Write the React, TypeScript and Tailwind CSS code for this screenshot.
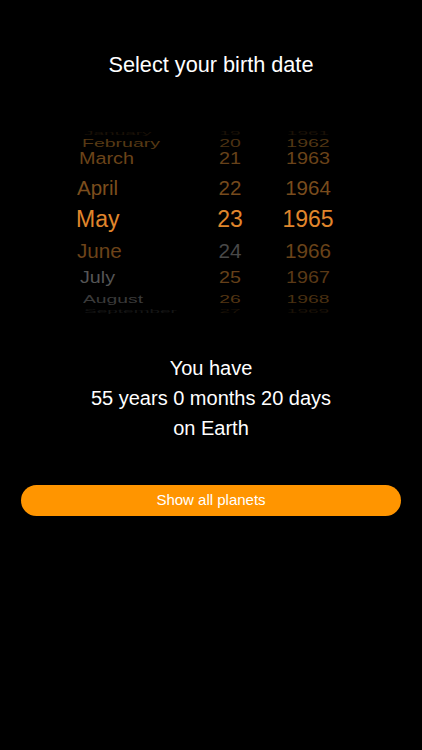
import React from "react";

type Row = {
  m: string;
  d: string;
  y: string;
  h: string;
  txt: string;
  pl: string;
  mc: string;
  dc: string;
  yc: string;
};

const rows: Row[] = [
  { m: "January", d: "19", y: "1961", h: "h-[10px]", txt: "text-[19px] scale-y-[0.25]", pl: "pl-[84px]", mc: "text-[#1a1107]", dc: "text-[#1a1107]", yc: "text-[#1a1107]" },
  { m: "February", d: "20", y: "1962", h: "h-[9px]", txt: "text-[19.5px] scale-y-[0.58]", pl: "pl-[82px]", mc: "text-[#563914]", dc: "text-[#4c3213]", yc: "text-[#523714]" },
  { m: "March", d: "21", y: "1963", h: "h-[31px]", txt: "text-[19.8px] scale-y-[0.82]", pl: "pl-[79px]", mc: "text-[#6c4419]", dc: "text-[#664119]", yc: "text-[#6b4319]" },
  { m: "April", d: "22", y: "1964", h: "h-[28px]", txt: "text-[20.5px] scale-y-[0.98]", pl: "pl-[77px]", mc: "text-[#7c4e1d]", dc: "text-[#764a1c]", yc: "text-[#794c1d]" },
  { m: "May", d: "23", y: "1965", h: "h-[34px]", txt: "text-[23px]", pl: "pl-[76px]", mc: "text-[#e0862c]", dc: "text-[#e0862c]", yc: "text-[#e0862c]" },
  { m: "June", d: "24", y: "1966", h: "h-[30px]", txt: "text-[20.7px] scale-y-[0.94]", pl: "pl-[77px]", mc: "text-[#6c4319]", dc: "text-[#484848]", yc: "text-[#6a4319]" },
  { m: "July", d: "25", y: "1967", h: "h-[24px]", txt: "text-[19.7px] scale-y-[0.84]", pl: "pl-[80px]", mc: "text-[#555555]", dc: "text-[#664019]", yc: "text-[#5a3916]" },
  { m: "August", d: "26", y: "1968", h: "h-[12px]", txt: "text-[19.3px] scale-y-[0.58]", pl: "pl-[83px]", mc: "text-[#3a3a3a]", dc: "text-[#533513]", yc: "text-[#4a3011]" },
  { m: "September", d: "27", y: "1969", h: "h-[14px]", txt: "text-[19px] scale-y-[0.25]", pl: "pl-[84px]", mc: "text-[#161616]", dc: "text-[#1a1107]", yc: "text-[#1a1107]" },
];

export default function App() {
  return (
    <div
      className="w-[422px] h-[750px] bg-black flex flex-col items-center overflow-hidden"
      style={{ fontFamily: '"Liberation Sans", Arial, Helvetica, sans-serif' }}
    >
      <div className="mt-[50px] h-[30px] leading-[30px] text-[21.7px] text-white">Select your birth date</div>

      <div className="mt-[44px] w-full flex flex-col">
        {rows.map((r) => (
          <div key={r.m} className={`${r.h} w-full grid grid-cols-[200px_60px_96px] items-center overflow-visible`}>
            <div className={`${r.pl} flex items-center`}>
              <span className={`inline-block leading-none whitespace-nowrap origin-center ${r.txt} ${r.mc}`}>{r.m}</span>
            </div>
            <div className="flex items-center justify-center">
              <span className={`inline-block leading-none origin-center ${r.txt} ${r.dc}`}>{r.d}</span>
            </div>
            <div className="flex items-center justify-center">
              <span className={`inline-block leading-none origin-center ${r.txt} ${r.yc}`}>{r.y}</span>
            </div>
          </div>
        ))}
      </div>

      <div className="mt-[37px] flex flex-col items-center text-white text-[20px] leading-[30px]">
        <div>You have</div>
        <div>55 years 0 months 20 days</div>
        <div>on Earth</div>
      </div>

      <button className="mt-[42px] w-[380px] h-[31px] rounded-full bg-[#ff9500] text-white text-[15px] flex items-center justify-center">
        Show all planets
      </button>
    </div>
  );
}
